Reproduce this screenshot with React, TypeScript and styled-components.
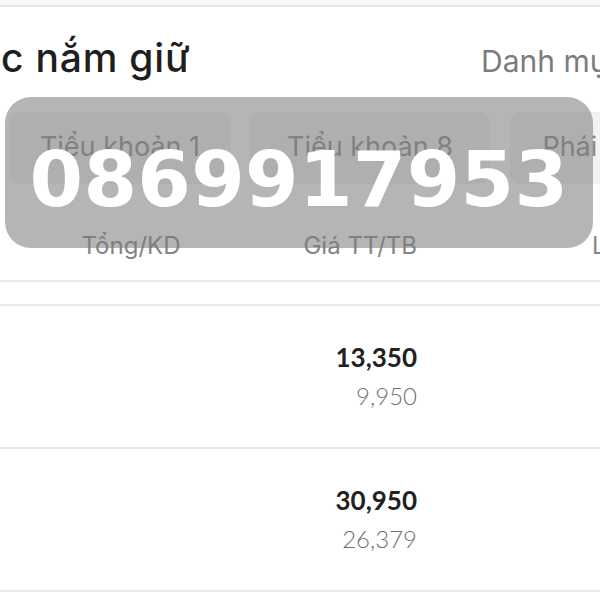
import styled, { createGlobalStyle } from 'styled-components'

const GlobalStyle = createGlobalStyle`
  html, body {
    margin: 0;
    padding: 0;
    background: #fff;
  }
  body {
    font-family: 'Lato', 'Noto Sans', sans-serif;
    color: #1f1f1f;
  }
`

const Screen = styled.div`
  position: relative;
  width: 600px;
  height: 600px;
  overflow: hidden;
  background: #fff;
`

const TopStrip = styled.div`
  height: 5px;
  background: #f7f7f7;
  border-bottom: 2px solid #e6e6e6;
`

const Header = styled.div`
  display: flex;
  justify-content: space-between;
  align-items: baseline;
  height: 80px;
  padding: 27px 0 0 1px;
  box-sizing: border-box;
  white-space: nowrap;
`

const Title = styled.h2`
  margin: 0;
  font-family: 'Inter', 'Noto Sans', sans-serif;
  font-size: 39px;
  font-weight: 500;
  color: #1e1e1e;
  letter-spacing: 0.8px;
`

const PortfolioLink = styled.span`
  width: 119px;
  overflow: hidden;
  font-family: 'Inter', 'Noto Sans', sans-serif;
  font-size: 30px;
  font-weight: 400;
  color: #7c7c7c;
`

const TabRow = styled.div`
  display: flex;
  gap: 20px;
  padding: 25px 0 0 10px;
  white-space: nowrap;
`

const Tab = styled.div<{ $width: number }>`
  flex: none;
  width: ${({ $width }) => $width}px;
  height: 72px;
  border-radius: 10px;
  background: #f2f2f2;
  display: flex;
  align-items: center;
  justify-content: center;
  padding-bottom: 4px;
  box-sizing: border-box;
  font-family: 'Inter', 'Noto Sans', sans-serif;
  font-size: 27px;
  color: #8a8a8a;
`

const ColumnHead = styled.div`
  display: grid;
  grid-template-columns: 230px 187px 1fr;
  align-items: center;
  height: 52px;
  margin-top: 35px;
  font-family: 'Inter', 'Noto Sans', sans-serif;
  font-size: 24px;
  color: #858585;
  white-space: nowrap;
`

const HeadCell = styled.span<{ $align: 'left' | 'center' | 'right' }>`
  text-align: ${({ $align }) => $align};
  padding-left: ${({ $align }) => ($align === 'center' ? '32px' : '0')};
  &:last-child {
    padding-left: 175px;
  }
`

const Divider = styled.div`
  height: 22px;
  margin-top: 9px;
  border-top: 2px solid #e8e8e8;
  border-bottom: 2px solid #e8e8e8;
`

const HoldingRow = styled.div`
  display: grid;
  grid-template-columns: 417px 1fr;
  height: 141px;
  border-bottom: 2px solid #e8e8e8;
`

const PriceCell = styled.div`
  display: flex;
  flex-direction: column;
  align-items: flex-end;
  justify-content: center;
  gap: 13px;
`

const Current = styled.span`
  font-size: 26px;
  font-weight: 700;
  color: #222;
  line-height: 26px;
`

const Average = styled.span`
  font-size: 24px;
  font-weight: 300;
  color: #707070;
  line-height: 26px;
`

const Watermark = styled.div`
  position: absolute;
  left: 5px;
  top: 97px;
  width: 588px;
  height: 151px;
  border-radius: 26px;
  background: rgba(120, 120, 120, 0.55);
  display: flex;
  align-items: center;
  justify-content: center;
  padding-top: 14px;
  box-sizing: border-box;
  font-family: 'DejaVu Sans', sans-serif;
  font-weight: 700;
  font-size: 77px;
  color: #fff;
  letter-spacing: 0.3px;
`

const holdings = [
  { current: '13,350', average: '9,950' },
  { current: '30,950', average: '26,379' }
]

export default function App() {
  return (
    <Screen>
      <GlobalStyle />
      <TopStrip />
      <Header>
        <Title>c nắm giữ</Title>
        <PortfolioLink>Danh mục</PortfolioLink>
      </Header>
      <TabRow>
        <Tab $width={220}>Tiểu khoản 1</Tab>
        <Tab $width={240}>Tiểu khoản 8</Tab>
        <Tab $width={180}>Phái sinh</Tab>
      </TabRow>
      <ColumnHead>
        <HeadCell $align="center">Tổng/KD</HeadCell>
        <HeadCell $align="right">Giá TT/TB</HeadCell>
        <HeadCell $align="left">Lãi/lỗ</HeadCell>
      </ColumnHead>
      <Divider />
      {holdings.map(h => (
        <HoldingRow key={h.current}>
          <PriceCell>
            <Current>{h.current}</Current>
            <Average>{h.average}</Average>
          </PriceCell>
        </HoldingRow>
      ))}
      <Watermark>0869917953</Watermark>
    </Screen>
  )
}
